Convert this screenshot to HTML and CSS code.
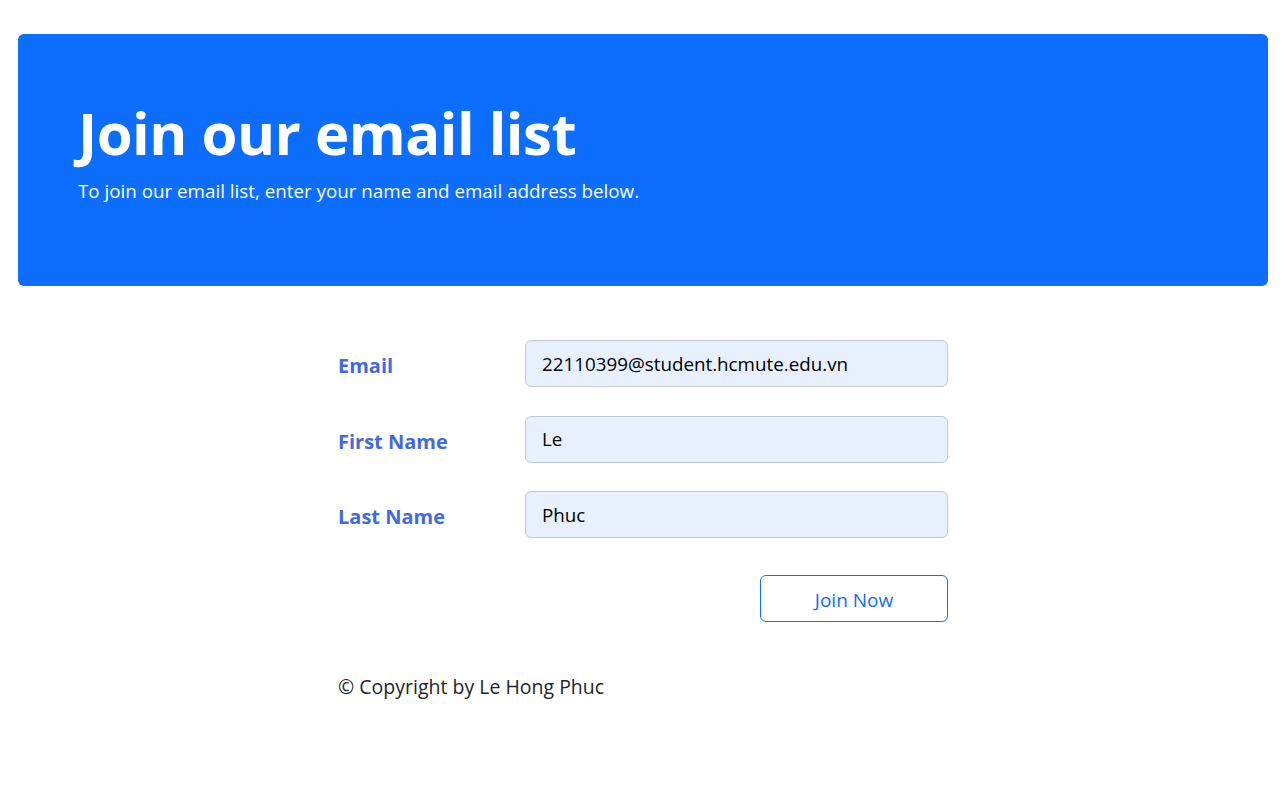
FILE: index.html
```html
<!DOCTYPE html>
<html lang="en">
<head>
<meta charset="utf-8">
<title>Join our email list</title>
<link rel="stylesheet" href="styles.css">
</head>
<body>
<div class="page">
  <header class="hero">
    <h1 class="hero-title">Join our email list</h1>
    <p class="hero-lead">To join our email list, enter your name and email address below.</p>
  </header>
  <main class="content">
    <form class="signup">
      <label class="field-label" for="email">Email</label>
      <input class="field-input" id="email" type="email" value="22110399@student.hcmute.edu.vn">
      <label class="field-label" for="first">First Name</label>
      <input class="field-input" id="first" type="text" value="Le">
      <label class="field-label" for="last">Last Name</label>
      <input class="field-input" id="last" type="text" value="Phuc">
      <div class="actions">
        <button class="btn-join" type="button">Join Now</button>
      </div>
    </form>
    <p class="copyright">© Copyright by Le Hong Phuc</p>
  </main>
</div>
</body>
</html>
```

FILE: styles.css
```css
* { box-sizing: border-box; }
html, body { margin: 0; padding: 0; background: #fff; }
body {
  font-family: "Open Sans", "Noto Sans", "Liberation Sans", sans-serif;
  color: #212529;
}
.page {
  padding: 34px 19px 0 18px;
}
.hero {
  background: #0d6efd;
  color: #fff;
  border-radius: 6px;
  height: 252px;
  padding: 60px 60px 0 60px;
}
.hero-title {
  margin: 0;
  font-size: 58px;
  font-weight: 700;
  line-height: 77px;
  letter-spacing: -0.5px;
}
.hero-lead {
  margin: 5px 0 0;
  font-size: 18.8px;
  line-height: 30px;
}
.content {
  width: 610px;
  margin: 54px auto 0;
}
.signup {
  display: grid;
  grid-template-columns: 187px 423px;
  row-gap: 28.5px;
  align-items: center;
}
.field-label {
  color: #4169e1;
  font-weight: 700;
  font-size: 20px;
  padding-top: 4px;
}
.field-input {
  height: 47px;
  width: 100%;
  border: 1px solid #c4c8d0;
  border-radius: 6px;
  background: #e8f0fe;
  padding: 0 16px;
  font-family: inherit;
  font-size: 18.8px;
  color: #000;
}
.actions {
  grid-column: 1 / span 2;
  display: flex;
  justify-content: flex-end;
  margin-top: 8px;
}
.btn-join {
  width: 188px;
  height: 47px;
  border: 1px solid #0d6efd;
  border-radius: 6px;
  background: #fff;
  color: #0d6efd;
  font-family: inherit;
  font-size: 19px;
  padding: 3px 0 0;
}
.copyright {
  margin: 50px 0 0;
  font-size: 19.5px;
  line-height: 30px;
}
```
